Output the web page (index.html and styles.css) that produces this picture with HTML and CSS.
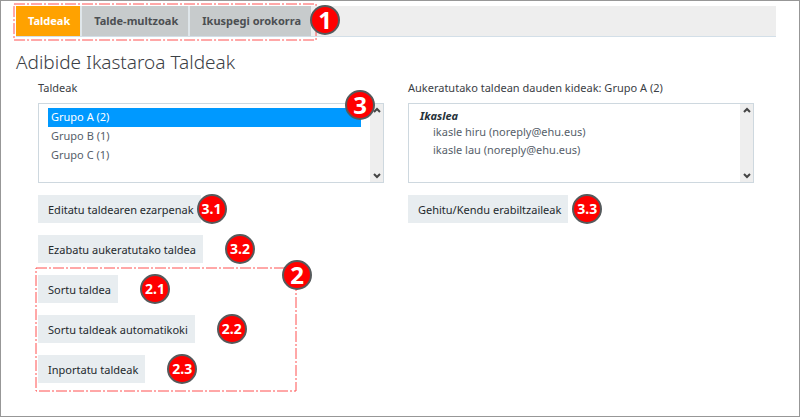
FILE: index.html
```
<!DOCTYPE html>
<html lang="eu">
<head>
    <meta charset="UTF-8">
    <meta name="viewport" content="width=device-width, initial-scale=1.0">
    <title>Adibide Ikastaroa Taldeak</title>
    <link rel="stylesheet" href="styles.css">
</head>
<body>

    <nav class="tabs">
        <div class="tab-group">
            <a class="tab active" href="#taldeak">Taldeak</a>
            <a class="tab" href="#multzoak">Talde-multzoak</a>
            <a class="tab" href="#orokorra">Ikuspegi orokorra</a>
            <svg class="outline"><rect x="1" y="1" width="100%" height="100%"/></svg>
            <span class="badge big tabs-badge">1</span>
        </div>
    </nav>

    <h1>Adibide Ikastaroa Taldeak</h1>

    <form class="columns">
        <!-- Groups -->
        <div class="column">
            <label for="groups">Taldeak</label>
            <div class="listbox">
                <select id="groups" size="4" multiple>
                    <option selected>Grupo A (2)</option>
                    <option>Grupo B (1)</option>
                    <option>Grupo C (1)</option>
                </select>
                <div class="scroll">
                    <svg viewBox="0 0 8 6"><path d="M1 5L4 2L7 5"/></svg>
                    <svg viewBox="0 0 8 6"><path d="M1 1L4 4L7 1"/></svg>
                </div>
                <span class="badge big list-badge">3</span>
            </div>
            <div class="row close"><button type="button">Editatu taldearen ezarpenak</button><span class="badge">3.1</span></div>
            <div class="row"><button type="button">Ezabatu aukeratutako taldea</button><span class="badge">3.2</span></div>
            <div class="create">
                <div class="row"><button type="button">Sortu taldea</button><span class="badge">2.1</span></div>
                <div class="row"><button type="button">Sortu taldeak automatikoki</button><span class="badge">2.2</span></div>
                <div class="row"><button type="button">Inportatu taldeak</button><span class="badge">2.3</span></div>
                <svg class="outline"><rect x="1" y="1" width="100%" height="100%"/></svg>
                <span class="badge big create-badge">2</span>
            </div>
        </div>

        <!-- Members of the selected group -->
        <div class="column">
            <label for="members">Aukeratutako taldean dauden kideak: Grupo A (2)</label>
            <div class="listbox">
                <select id="members" size="4" multiple>
                    <optgroup label="Ikaslea">
                        <option>ikasle hiru (noreply@ehu.eus)</option>
                        <option>ikasle lau (noreply@ehu.eus)</option>
                    </optgroup>
                </select>
                <div class="scroll">
                    <svg viewBox="0 0 8 6"><path d="M1 5L4 2L7 5"/></svg>
                    <svg viewBox="0 0 8 6"><path d="M1 1L4 4L7 1"/></svg>
                </div>
            </div>
            <div class="row near"><button type="button">Gehitu/Kendu erabiltzaileak</button><span class="badge">3.3</span></div>
        </div>
    </form>

</body>
</html>
```

FILE: styles.css
```
* {
    box-sizing: border-box;
}
body {
    font-family: "Noto Sans", "Open Sans", sans-serif;
    font-size: 11px;
    color: #3b4045;
    background-color: #fff;
    margin: 0;
    padding: 5px 23px 0 15px;
    min-height: 100vh;
    border: 1px solid #979797;
}
.tabs {
    background-color: #eee;
    border-bottom: 1px solid #d3dfe8;
}
.tab-group {
    position: relative;
    display: flex;
    gap: 2px;
    width: max-content;
    background-color: #dfe6ea;
}
.tab {
    padding: 0 10px 0 12px;
    line-height: 30px;
    font-weight: bold;
    color: #4c4f52;
    background-color: #c7cbcc;
    text-decoration: none;
}
.tab.active {
    background-color: #ffa200;
    color: #fff;
}
.outline {
    position: absolute;
    fill: none;
    stroke: #ff5050;
    stroke-width: 1px;
    stroke-dasharray: 11 2 2 2;
    overflow: visible;
    pointer-events: none;
}
.tab-group .outline {
    top: -3px;
    left: -3px;
    width: calc(100% + 7px);
    height: 36px;
}
h1 {
    margin: 9px 0 0;
    font-size: 19px;
    line-height: 32px;
    font-weight: 300;
}
.columns {
    display: grid;
    grid-template-columns: 1fr 1fr;
    gap: 24px;
    padding: 0 22px;
}
label {
    display: block;
    line-height: 20px;
    margin-bottom: 5px;
}
.listbox {
    position: relative;
    display: flex;
    height: 80px;
    border: 1px solid #ced8df;
    margin-bottom: 12px;
}
select {
    flex: 1;
    min-width: 0;
    padding: 4px 9px;
    border: none;
    outline: none;
    background: none;
    font: inherit;
    color: #56606a;
    overflow: hidden;
}
option {
    padding: 1px 3px 0;
    min-height: 19px;
    line-height: 18px;
}
option:checked {
    background: linear-gradient(#0099ff, #0099ff);
    color: #fff;
}
optgroup {
    padding: 0;
    line-height: 18px;
    font-weight: bold;
    font-style: italic;
    color: #27323a;
}
optgroup option {
    min-height: 18px;
    padding: 0 3px 0 15px;
    font-weight: normal;
    font-style: normal;
    color: #56606a;
}
optgroup option::before {
    content: none;
}
.scroll {
    display: flex;
    flex-direction: column;
    justify-content: space-between;
    align-items: center;
    width: 13px;
    padding: 3px 0;
    background-color: #eee;
}
.scroll svg {
    width: 8px;
    height: 6px;
    fill: none;
    stroke: #444;
    stroke-width: 2px;
}
.row {
    display: flex;
    align-items: center;
    gap: 22px;
    height: 28px;
    margin-bottom: 12px;
}
.row.close {
    gap: 0;
}
.row.close .badge {
    margin-left: -4px;
}
.row.near {
    gap: 4px;
}
button {
    height: 28px;
    padding: 0 7px 0 10px;
    border: none;
    background-color: #e8edf0;
    color: #24292d;
    font: inherit;
    white-space: nowrap;
    cursor: pointer;
}
.badge {
    flex: none;
    width: 30px;
    height: 30px;
    border: 2px solid #555a5c;
    border-radius: 50%;
    background-color: #f00;
    color: #fff;
    font-size: 14px;
    line-height: 26px;
    font-weight: bold;
    text-align: center;
}
.badge.big {
    position: absolute;
    font-size: 24px;
    line-height: 25px;
}
.tabs-badge {
    top: -1px;
    right: -29px;
}
.list-badge {
    top: -14px;
    right: 8px;
}
.create {
    position: relative;
    width: 260px;
}
.create .outline {
    top: -8px;
    left: -3px;
    width: 100%;
    height: calc(100% + 15px);
}
.create-badge {
    top: -15px;
    right: -14px;
}
```
